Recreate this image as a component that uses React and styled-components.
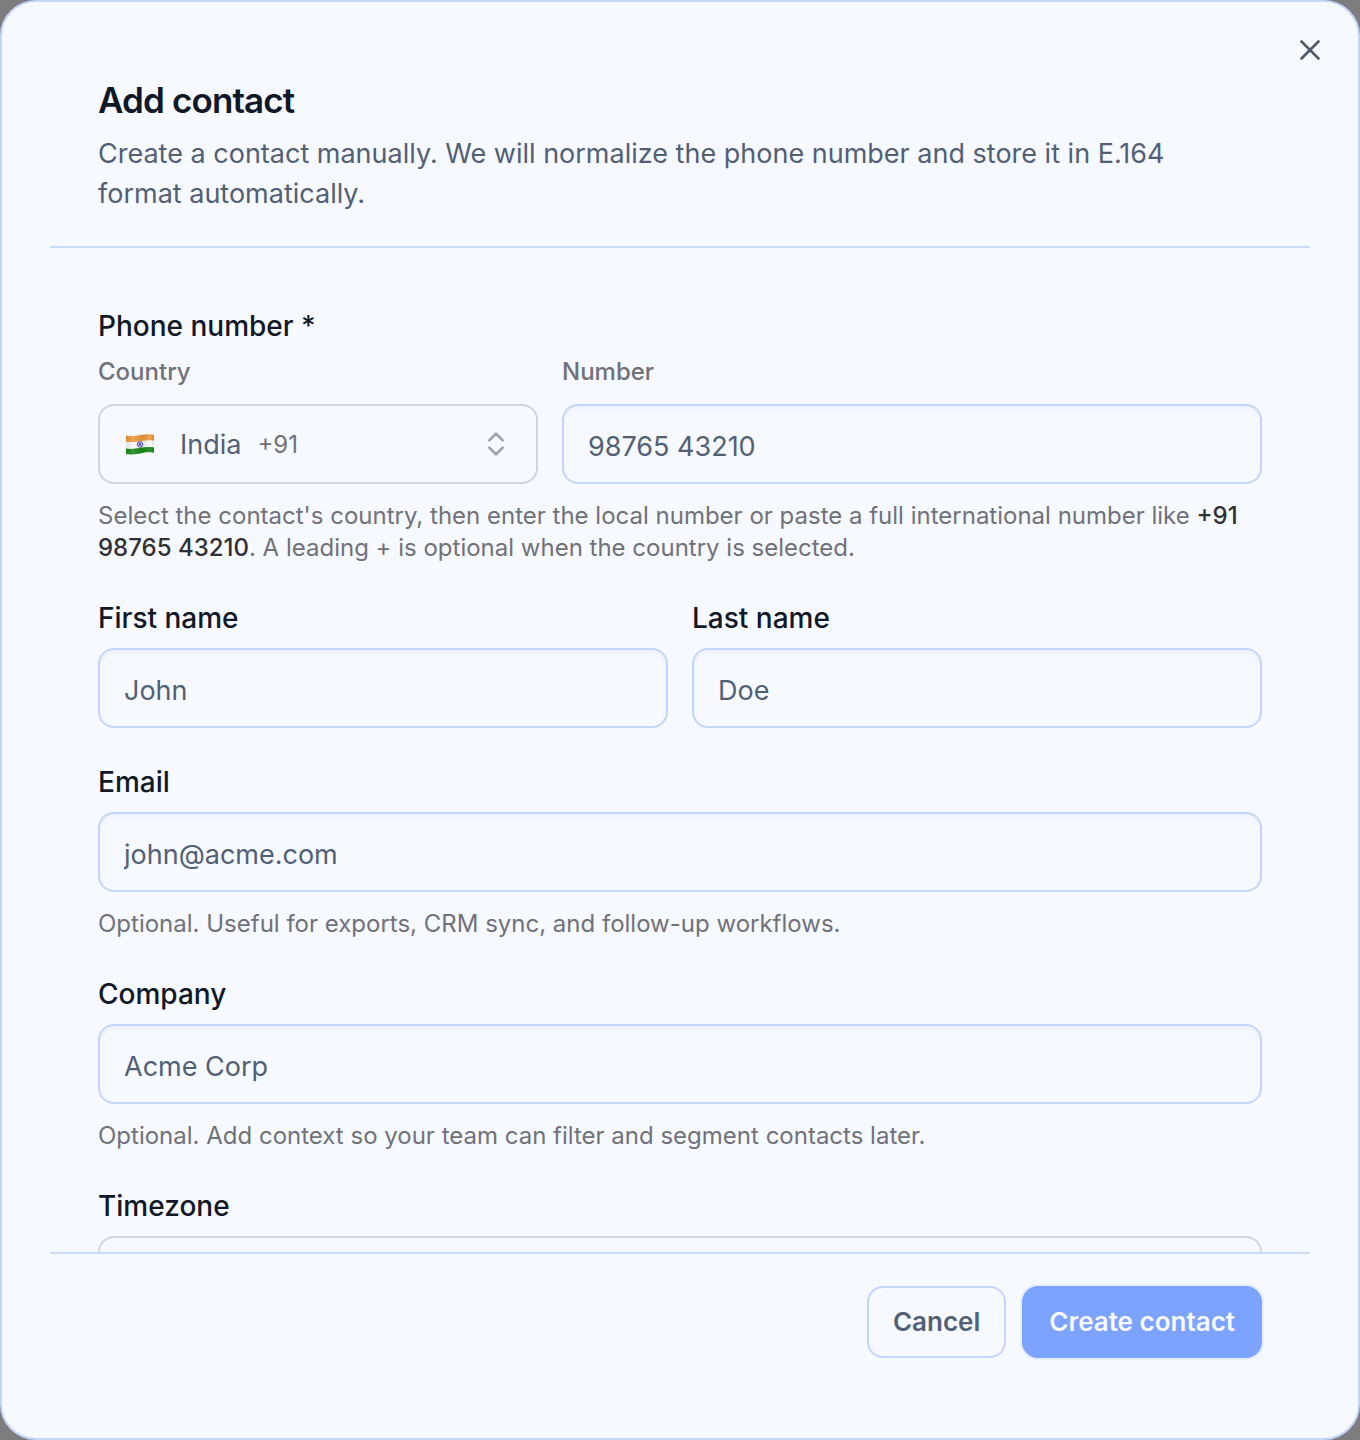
import React, { useId, useState } from "react";
import styled, { createGlobalStyle } from "styled-components";

const countries = {
  India: "+91",
  "United States": "+1",
  "United Kingdom": "+44",
};

const timezones = ["Asia/Kolkata", "America/New_York", "Europe/London"];

const IndiaFlag = () => (
  <svg width="28" height="21" viewBox="0 0 28 21" aria-hidden="true">
    <defs>
      <clipPath id="flag">
        <path d="M0 1.6C5 2.6 9 2 14 1S23 -0.2 28 .8V18.8C23 17.8 19 18.4 14 19.4S5 20.8 0 20Z" />
      </clipPath>
      <linearGradient id="shine">
        <stop offset="0" stopColor="#000" stopOpacity="0.08" />
        <stop offset="0.25" stopColor="#fff" stopOpacity="0.12" />
        <stop offset="0.6" stopColor="#000" stopOpacity="0.08" />
        <stop offset="0.85" stopColor="#fff" stopOpacity="0.1" />
        <stop offset="1" stopColor="#000" stopOpacity="0.08" />
      </linearGradient>
    </defs>
    <g clipPath="url(#flag)">
      <rect width="28" height="21" fill="#f8f8f6" />
      <path d="M0 0H28V6.6C23 5.8 19 6.2 14 7.2S5 8.6 0 7.8Z" fill="#f19a3e" />
      <path d="M0 14.6C5 15.4 9 14.8 14 13.8S23 12.6 28 13.4V21H0Z" fill="#1b8a1b" />
      <rect width="28" height="21" fill="url(#shine)" />
      <circle cx="14" cy="10.4" r="2.7" fill="#dcdcf2" stroke="#35359b" strokeWidth="0.8" />
      <path
        d="M14 8V12.8M11.6 10.4H16.4M12.3 8.7L15.7 12.1M15.7 8.7L12.3 12.1"
        stroke="#35359b"
        strokeWidth="0.4"
      />
      <circle cx="14" cy="10.4" r="0.8" fill="#35359b" />
    </g>
  </svg>
);

const TextField = ({ label, hint, ...rest }) => {
  const id = useId();
  return (
    <Field>
      <Label htmlFor={id}>{label}</Label>
      <Input id={id} {...rest} />
      {hint && <Hint>{hint}</Hint>}
    </Field>
  );
};

const Chevrons = () => (
  <ChevronIcon viewBox="0 0 32 32" aria-hidden="true">
    <path d="M9.3 12.3 16 5.6 22.7 12.3M9.3 19.7 16 26.4 22.7 19.7" />
  </ChevronIcon>
);

const App = () => {
  const [country, setCountry] = useState("India");
  return (
    <>
      <GlobalStyle />
      <Dialog role="dialog" aria-labelledby="dialog-title">
        <CloseButton type="button" aria-label="Close">
          <svg width="20" height="20" viewBox="0 0 20 20">
            <path d="M1.5 1.5 18.5 18.5M18.5 1.5 1.5 18.5" />
          </svg>
        </CloseButton>
        <Header>
          <Title id="dialog-title">Add contact</Title>
          <Description>
            Create a contact manually. We will normalize the phone number and
            store it in E.164 format automatically.
          </Description>
        </Header>
        <Form id="contact-form">
          <Field>
            <GroupTitle>Phone number *</GroupTitle>
            <PhoneRow>
              <Field>
                <SubLabel htmlFor="country">Country</SubLabel>
                <SelectBox>
                  <IndiaFlag />
                  <CountryValue>
                    <Select
                      id="country"
                      value={country}
                      onChange={(e) => setCountry(e.target.value)}
                    >
                      {Object.keys(countries).map((name) => (
                        <option key={name}>{name}</option>
                      ))}
                    </Select>
                    <DialCode>{countries[country]}</DialCode>
                  </CountryValue>
                  <Chevrons />
                </SelectBox>
              </Field>
              <Field>
                <SubLabel htmlFor="number">Number</SubLabel>
                <Input id="number" type="tel" placeholder="98765 43210" />
              </Field>
            </PhoneRow>
            <Hint>
              Select the contact's country, then enter the local number or paste
              a full international number like <strong>+91 98765 43210</strong>.
              A leading + is optional when the country is selected.
            </Hint>
          </Field>
          <NameRow>
            <TextField label="First name" placeholder="John" />
            <TextField label="Last name" placeholder="Doe" />
          </NameRow>
          <TextField
            label="Email"
            type="email"
            placeholder="john@acme.com"
            hint="Optional. Useful for exports, CRM sync, and follow-up workflows."
          />
          <TextField
            label="Company"
            placeholder="Acme Corp"
            hint="Optional. Add context so your team can filter and segment contacts later."
          />
          <Field>
            <Label htmlFor="timezone">Timezone</Label>
            <SelectBox>
              <Select id="timezone">
                {timezones.map((zone) => (
                  <option key={zone}>{zone}</option>
                ))}
              </Select>
              <Chevrons />
            </SelectBox>
          </Field>
        </Form>
        <Footer>
          <Button type="button">Cancel</Button>
          <Button type="submit" form="contact-form" $primary>
            Create contact
          </Button>
        </Footer>
      </Dialog>
    </>
  );
};

export default App;

const GlobalStyle = createGlobalStyle`
  * {
    box-sizing: border-box;
  }

  body {
    margin: 0;
    background: #7d7d7d;
    color: #111827;
    font-family: Inter, "Liberation Sans", sans-serif;
    font-size: 27px;
  }

  input, select, button {
    font: inherit;
  }
`;

const Dialog = styled.div`
  position: relative;
  display: flex;
  flex-direction: column;
  height: 100vh;
  padding: 48px;
  border: 2px solid #c3d5ff;
  border-radius: 36px;
  background: #f6f9ff;
`;

const CloseButton = styled.button`
  position: absolute;
  top: 28px;
  right: 28px;
  display: flex;
  padding: 10px;
  border: none;
  background: none;
  cursor: pointer;

  path {
    stroke: #525866;
    stroke-width: 2.6;
    stroke-linecap: round;
  }
`;

const Header = styled.header`
  padding: 32px 96px 32px 48px;
  border-bottom: 2px solid #cbdcff;
`;

const Title = styled.h2`
  margin: 0 0 16px;
  font-size: 35px;
  font-weight: 600;
  line-height: 36px;
  letter-spacing: -0.025em;
`;

const Description = styled.p`
  margin: 0;
  color: #526075;
  line-height: 40px;
`;

const Form = styled.form`
  display: flex;
  flex: 1;
  flex-direction: column;
  gap: 40px;
  min-height: 0;
  padding: 64px 48px;
  overflow-y: auto;
  scrollbar-width: none;

  & > * {
    flex-shrink: 0;
  }
`;

const Field = styled.div`
  display: flex;
  flex-direction: column;
  gap: 16px;
  min-width: 0;
`;

const Label = styled.label`
  font-size: 28px;
  font-weight: 500;
  line-height: 28px;
`;

const GroupTitle = styled.div`
  font-size: 28px;
  font-weight: 500;
  line-height: 28px;
`;

const SubLabel = styled.label`
  color: #71717a;
  font-size: 24px;
  font-weight: 500;
  line-height: 32px;
`;

const PhoneRow = styled.div`
  display: grid;
  grid-template-columns: 440px 1fr;
  gap: 24px;
`;

const NameRow = styled.div`
  display: grid;
  grid-template-columns: 1fr 1fr;
  gap: 24px;
`;

const Input = styled.input`
  width: 100%;
  height: 80px;
  padding: 4px 24px 0;
  border: 2px solid #c3d5ff;
  border-radius: 16px;
  background: transparent;
  box-shadow: inset 0 4px 4px rgba(15, 23, 42, 0.03);
  color: #111827;

  &::placeholder {
    color: #526075;
    opacity: 1;
  }
`;

const SelectBox = styled.div`
  display: flex;
  align-items: center;
  gap: 26px;
  height: 80px;
  padding: 0 24px 0 26px;
  border: 2px solid #d4d4d8;
  border-radius: 16px;
`;

const CountryValue = styled.div`
  display: flex;
  align-items: center;
  gap: 16px;
`;

const Select = styled.select`
  padding: 0;
  border: none;
  appearance: none;
  field-sizing: content;
  background: none;
  color: #526075;
`;

const DialCode = styled.span`
  color: #71717a;
  font-size: 24px;
`;

const ChevronIcon = styled.svg`
  width: 32px;
  height: 32px;
  margin-left: auto;
  fill: none;
  stroke: #9f9fa9;
  stroke-width: 2.6;
  stroke-linecap: round;
  stroke-linejoin: round;
`;

const Hint = styled.p`
  margin: 0;
  color: #71717a;
  font-size: 24px;
  line-height: 32px;

  strong {
    color: #303036;
    font-weight: 500;
  }
`;

const Footer = styled.footer`
  display: flex;
  justify-content: flex-end;
  gap: 16px;
  padding: 32px 48px;
  border-top: 2px solid #cbdcff;
`;

const Button = styled.button`
  height: 72px;
  padding: 0 ${(p) => (p.$primary ? "25px" : "24px")} 2px;
  border: 2px solid ${(p) => (p.$primary ? "#7ca3ff" : "#c3d5ff")};
  border-radius: 16px;
  background: ${(p) => (p.$primary ? "#7ca3ff" : "transparent")};
  box-shadow: ${(p) => (p.$primary ? "0 0 0 2px #e6eeff" : "none")};
  color: ${(p) => (p.$primary ? "#f8faff" : "#526075")};
  font-size: 26px;
  font-weight: 600;
  cursor: pointer;
`;
